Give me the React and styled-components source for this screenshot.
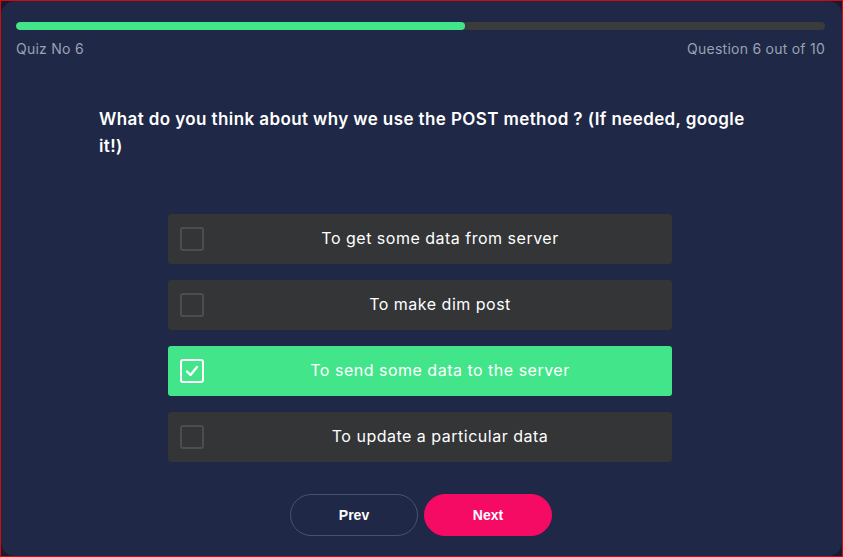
import React from "react";
import styled, { createGlobalStyle } from "styled-components";

const GlobalStyle = createGlobalStyle`
  body {
    margin: 0;
    background: #1b1832;
    font-family: "Inter", "Open Sans", sans-serif;
  }
`;

const Frame = styled.div`
  width: 843px;
  height: 557px;
  box-sizing: border-box;
  border: 1px solid #d20a0a;
  background: #1b1832;
`;

const Card = styled.div`
  height: 100%;
  box-sizing: border-box;
  border-radius: 14px;
  background: #1f2846;
  padding: 21px 17px 0 15px;
  display: flex;
  flex-direction: column;
`;

const Track = styled.div`
  height: 8px;
  border-radius: 4px;
  background: #393c3b;
  overflow: hidden;
`;

const Fill = styled.div`
  height: 100%;
  border-radius: 4px;
  background: #43e58a;
`;

const Meta = styled.div`
  display: flex;
  justify-content: space-between;
  margin-top: 9px;
  font-size: 14px;
  line-height: 20px;
  color: #9aa1b3;
  letter-spacing: 0.25px;
`;

const Question = styled.h2`
  margin: 47px 0 0 83px;
  width: 655px;
  font-size: 17px;
  line-height: 27px;
  font-weight: 600;
  color: #ffffff;
  letter-spacing: 0.4px;
`;

const Options = styled.div`
  display: flex;
  flex-direction: column;
  gap: 16px;
  width: 504px;
  margin: 54px 0 0 152px;
`;

const Option = styled.div`
  height: 50px;
  box-sizing: border-box;
  padding-left: 12px;
  border-radius: 3px;
  background: ${(p) => (p.selected ? "#43e58a" : "#333537")};
  display: flex;
  align-items: center;
  font-size: 16px;
  letter-spacing: 0.5px;
  color: #ffffff;
`;

const Box = styled.span`
  flex: none;
  width: 20px;
  height: 20px;
  border: 2px solid ${(p) => (p.checked ? "#ffffff" : "#4b4e51")};
  border-radius: 3px;
  display: flex;
  align-items: center;
  justify-content: center;
`;

const Label = styled.span`
  flex: 1;
  margin-left: 4px;
  margin-top: -2px;
  text-align: center;
`;

const Buttons = styled.div`
  display: flex;
  gap: 6px;
  margin: 32px 0 0 274px;
`;

const Button = styled.button`
  width: 128px;
  height: 42px;
  border-radius: 21px;
  box-sizing: border-box;
  border: 1px solid ${(p) => (p.primary ? "#f50a64" : "#4a526a")};
  background: ${(p) => (p.primary ? "#f50a64" : "transparent")};
  color: #ffffff;
  font-family: "Liberation Sans", Arial, sans-serif;
  font-size: 14px;
  font-weight: 700;
  cursor: pointer;
`;

const answers = [
  "To get some data from server",
  "To make dim post",
  "To send some data to the server",
  "To update a particular data",
];

function Check() {
  return (
    <svg width="16" height="16" viewBox="0 0 16 16" fill="none" stroke="#fff" strokeWidth="2.4" strokeLinecap="round" strokeLinejoin="round">
      <polyline points="3,8.5 6.5,12 13,4" />
    </svg>
  );
}

export default function App() {
  const selected = 2;
  return (
    <>
      <GlobalStyle />
      <Frame>
        <Card>
          <Track>
            <Fill style={{ width: `${(5 / 9) * 100}%` }} />
          </Track>
          <Meta>
            <span>Quiz No 6</span>
            <span>Question 6 out of 10</span>
          </Meta>
          <Question>
            What do you think about why we use the POST method ? (If needed, google it!)
          </Question>
          <Options>
            {answers.map((a, i) => (
              <Option key={a} selected={i === selected}>
                <Box checked={i === selected}>{i === selected && <Check />}</Box>
                <Label>{a}</Label>
              </Option>
            ))}
          </Options>
          <Buttons>
            <Button>Prev</Button>
            <Button primary>Next</Button>
          </Buttons>
        </Card>
      </Frame>
    </>
  );
}
